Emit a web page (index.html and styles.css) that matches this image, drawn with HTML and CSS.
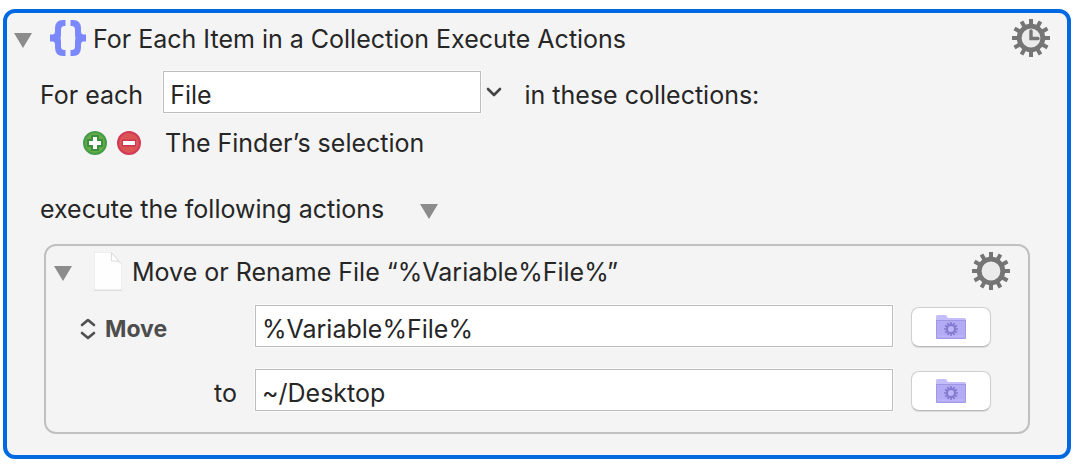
FILE: index.html
```html
<!DOCTYPE html>
<html lang="en">
<head>
    <meta charset="UTF-8">
    <meta name="viewport" content="width=device-width, initial-scale=1.0">
    <title>For Each Item in a Collection Execute Actions</title>
    <link rel="stylesheet" href="styles.css">
</head>
<body>
    <svg class="symbols" aria-hidden="true">
        <symbol id="gear" viewBox="0 0 38 38">
            <path d="M0 19H38M19 0V38M2.5 9.5L35.5 28.5M9.5 2.5L28.5 35.5M28.5 2.5L9.5 35.5M35.5 9.5L2.5 28.5" stroke="currentColor" stroke-width="4"/>
            <circle cx="19" cy="19" r="11.8" fill="#ebebeb" stroke="currentColor" stroke-width="4.8"/>
        </symbol>
        <symbol id="triangle" viewBox="0 0 18 15">
            <path d="M0 0H18L9 15Z" fill="#8c8c8c"/>
        </symbol>
        <symbol id="folder" viewBox="0 0 30 25">
            <path d="M0 24V1.5Q0 0 1.500 0H9Q10 0 10.500.8L11.500 2.500Q12 3 13 3H28.500Q30 3 30 4.500V24Z" fill="#c4bdfb"/>
            <path d="M0 5H30V22.500Q30 24 28.500 24H1.500Q0 24 0 22.500Z" fill="#b3acf5"/>
            <path d="M0 5.500H30" stroke="#9f96e6"/>
            <path d="M1 21H29" stroke="#c0b9fa"/>
            <path d="M.5 5V22.500Q.5 23.500 1.500 23.500H28.500Q29.500 23.500 29.500 22.500V5" fill="none" stroke="#a198e8"/>
            <path d="M8 14H22M15 7V21M9 10.500L21 17.500M11.500 8L18.500 20M18.500 8L11.500 20M21 10.500L9 17.500" stroke="#8379d0" stroke-width="1.600"/>
            <circle cx="15" cy="14" r="4" fill="#bcb5f8" stroke="#8379d0" stroke-width="2"/>
        </symbol>
    </svg>

    <section class="action action-outer">
        <header class="action-header">
            <button class="disclosure" aria-label="Collapse action"><svg width="18" height="15"><use href="#triangle"/></svg></button>
            <svg class="icon-braces" width="36" height="36" viewBox="0 0 36 36" aria-hidden="true">
                <g fill="#7b88fb">
                    <path id="brace" d="M15.500 0V6H14.500Q11 6 11 9.500V14Q11 16.500 10.500 18Q11 19.500 11 22V26.500Q11 30 14.500 30H15.500V36H13Q5 36 5 27.500V24.500Q5 21.500 2.500 21.500H0V14.500H2.500Q5 14.500 5 11.500V8.500Q5 0 13 0Z"/>
                    <use href="#brace" transform="matrix(-1 0 0 1 36 0)"/>
                </g>
            </svg>
            <h1>For Each Item in a Collection Execute Actions</h1>
            <button class="gear" aria-label="Action options">
                <svg width="38" height="38" viewBox="0 0 38 38">
                    <use href="#gear"/>
                    <path d="M19 12V19.500H26" fill="none" stroke="#757575" stroke-width="3.400" stroke-linecap="round"/>
                </svg>
            </button>
        </header>

        <div class="row row-variable">
            <label for="variable">For each</label>
            <input id="variable" type="text" value="File">
            <button class="picker" aria-label="Choose variable">
                <svg width="16" height="10" viewBox="0 0 16 10"><path d="M2 2L8 8L14 2" fill="none" stroke="#454545" stroke-width="2.600" stroke-linecap="round" stroke-linejoin="round"/></svg>
            </button>
            <span>in these collections:</span>
        </div>

        <div class="row row-collection">
            <button aria-label="Add collection">
                <svg width="24" height="24" viewBox="0 0 24 24">
                    <circle cx="12" cy="12" r="11" fill="#67ab46" stroke="#459c49" stroke-width="2"/>
                    <path d="M12 4V20M4 12H20" stroke="#3a8f41" stroke-width="8"/>
                    <path d="M12 6V18M6 12H18" stroke="#fff" stroke-width="4"/>
                </svg>
            </button>
            <button aria-label="Remove collection">
                <svg width="24" height="24" viewBox="0 0 24 24">
                    <circle cx="12" cy="12" r="11" fill="#db5554" stroke="#d23a57" stroke-width="2"/>
                    <path d="M5 12H19" stroke="#cc3450" stroke-width="7"/>
                    <path d="M6 12H18" stroke="#fff" stroke-width="4"/>
                </svg>
            </button>
            <span>The Finder’s selection</span>
        </div>

        <div class="row row-execute">
            <span>execute the following actions</span>
            <button class="disclosure" aria-label="Collapse actions list"><svg width="18" height="15"><use href="#triangle"/></svg></button>
        </div>

        <section class="action action-inner">
            <header class="action-header">
                <button class="disclosure" aria-label="Collapse action"><svg width="18" height="15"><use href="#triangle"/></svg></button>
                <svg class="icon-file" width="28" height="39" viewBox="0 0 28 39" aria-hidden="true">
                    <path d="M0 0H17L28 12V39H0Z" fill="#dedede"/>
                    <path d="M.5 .5H16.500L27.500 12.500V37.500H.5Z" fill="#fefefe"/>
                    <path d="M17 .5L27.500 13Q23 9 18 9Z" fill="#ececec"/>
                    <path d="M17.500 1V9H25Z" fill="#fff" stroke="#d4d4d4" stroke-width=".8"/>
                </svg>
                <h2>Move or Rename File “%Variable%File%”</h2>
                <button class="gear" aria-label="Action options"><svg width="38" height="38"><use href="#gear"/></svg></button>
            </header>

            <div class="file-grid">
                <div class="operation">
                    <svg width="16" height="22" viewBox="0 0 16 22" aria-hidden="true"><path d="M2 7L8 2L14 7M2 15L8 20L14 15" fill="none" stroke="#505050" stroke-width="2.600" stroke-linecap="round" stroke-linejoin="round"/></svg>
                    <select aria-label="Operation">
                        <option>Move</option>
                    </select>
                </div>
                <input type="text" value="%Variable%File%" aria-label="Source file">
                <button class="browse" aria-label="Choose source"><svg width="30" height="25"><use href="#folder"/></svg></button>

                <label class="to" for="destination">to</label>
                <input id="destination" type="text" value="~/Desktop">
                <button class="browse" aria-label="Choose destination"><svg width="30" height="25"><use href="#folder"/></svg></button>
            </div>
        </section>
    </section>
</body>
</html>
```

FILE: styles.css
```css
* {
    box-sizing: border-box;
}
body {
    margin: 9px 15px 7px 3px;
    background-color: #fff;
    color: #262626;
    font-family: Inter, "Liberation Sans", sans-serif;
    font-size: 25px;
    line-height: 32px;
}
h1, h2 {
    flex: 1;
    margin: 0;
    padding-top: 2px;
    font-size: 25px;
    font-weight: 400;
    white-space: nowrap;
}
svg {
    display: block;
}
button {
    flex: none;
    padding: 0;
    border: none;
    background: none;
    cursor: pointer;
}
input {
    min-width: 0;
    height: 42px;
    padding: 6px 6px 0;
    border: 1px solid #bdbdbd;
    background-color: #fff;
    box-shadow: 0 0 0 1px #fbfbfb;
    color: #262626;
    font: inherit;
}
.symbols {
    position: absolute;
    width: 0;
    height: 0;
}
.action {
    background-color: #f4f4f4;
}
.action-outer {
    padding-bottom: 21px;
    border: 4px solid #0069e2;
    border-radius: 12px;
}
.action-inner {
    margin: 0 37px;
    padding-bottom: 21px;
    border: 2px solid #c0c0c0;
    border-radius: 12px;
}
.action-header {
    display: flex;
    align-items: center;
    height: 50px;
    padding: 0 17px 0 7px;
}
.action-inner .action-header {
    padding: 0 18px 0 8px;
}
.disclosure {
    padding-top: 4px;
}
.icon-braces {
    margin: 0 7px 0 18px;
}
.icon-file {
    margin: 0 10px 0 22px;
}
.gear {
    color: #757575;
}
.row {
    display: flex;
    align-items: center;
    padding-left: 33px;
}
.row-variable {
    margin-top: 8px;
}
.row-variable label,
.row-variable span {
    padding-top: 6px;
}
.row-variable input {
    width: 31%;
    margin: 0 5px 0 20px;
}
.picker {
    margin-right: 22px;
}
.row-collection {
    gap: 10px;
    margin-top: 14px;
    padding-left: 76px;
}
.row-collection span {
    margin-left: 14px;
}
.row-execute {
    gap: 36px;
    margin: 34px 0 19px;
}
.file-grid {
    display: grid;
    grid-template-columns: 157px 1fr 80px;
    gap: 22px 18px;
    align-items: center;
    margin-top: 9px;
    padding: 0 37px 0 34px;
}
.operation {
    display: flex;
    align-items: center;
    gap: 9px;
    padding-top: 6px;
}
select {
    padding: 0;
    border: none;
    background: none;
    appearance: none;
    color: #4d4d4d;
    font: inherit;
    font-size: 23px;
    font-weight: 700;
}
.to {
    padding-top: 6px;
    text-align: right;
}
.browse {
    display: flex;
    align-items: center;
    justify-content: center;
    align-self: end;
    height: 40px;
    border: 1px solid #cfcfcf;
    border-bottom-color: #b8b8b8;
    border-radius: 8px;
    background-color: #fff;
    box-shadow: 0 1px 1px #dcdcdc;
}
```
